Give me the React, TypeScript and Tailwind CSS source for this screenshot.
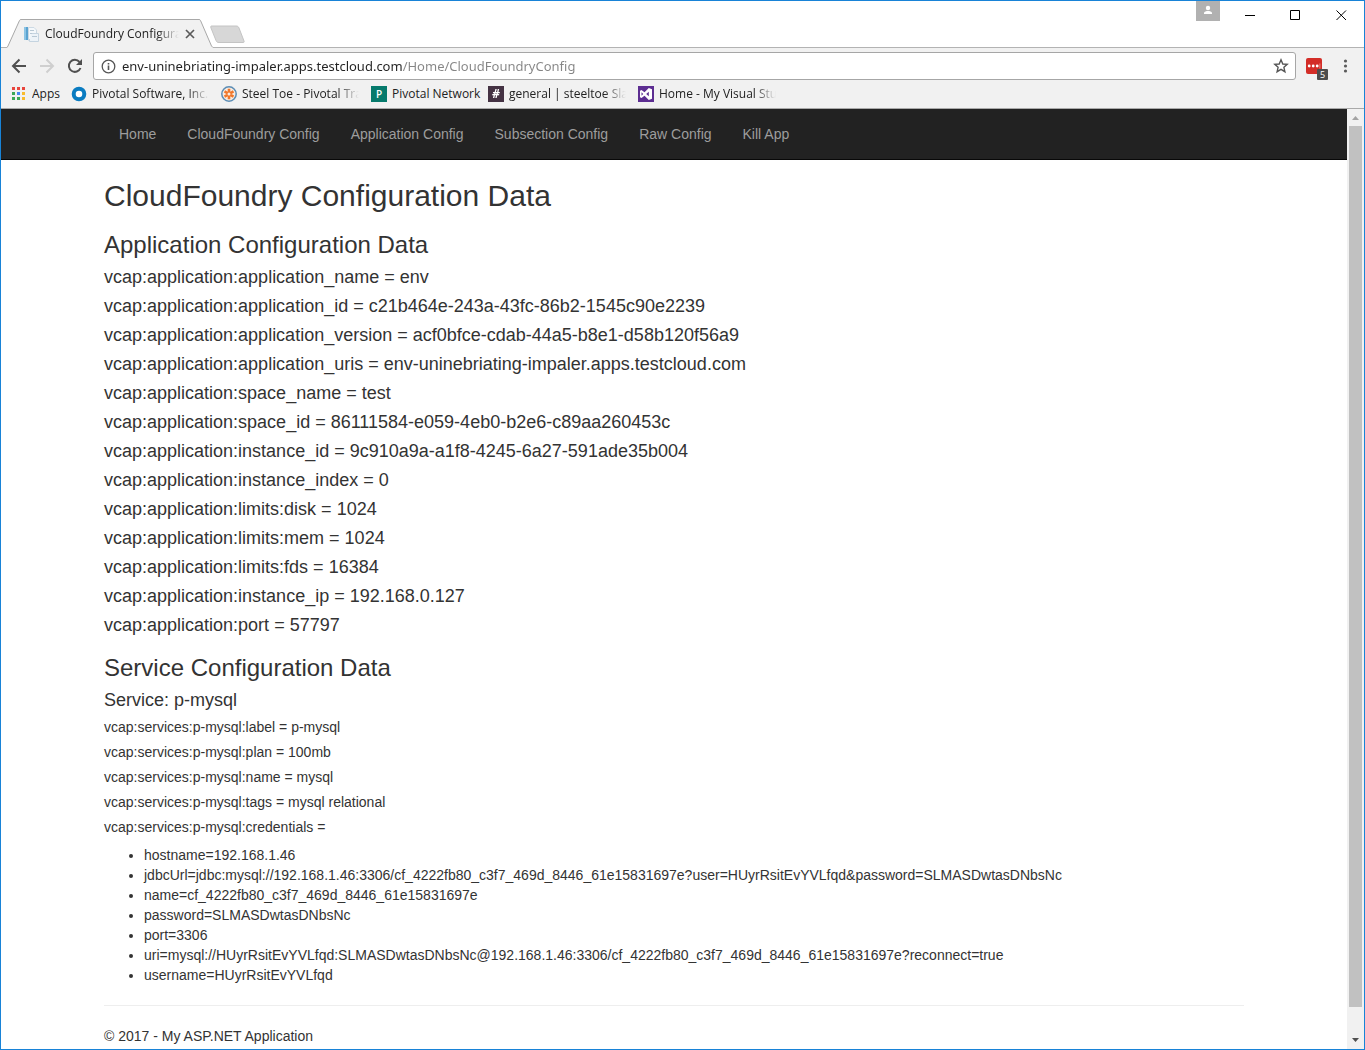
import type { ReactNode } from "react";

const navLinks = ["Home", "CloudFoundry Config", "Application Config", "Subsection Config", "Raw Config", "Kill App"];

const appSettings: [string, string][] = [
  ["application_name", "env"],
  ["application_id", "c21b464e-243a-43fc-86b2-1545c90e2239"],
  ["application_version", "acf0bfce-cdab-44a5-b8e1-d58b120f56a9"],
  ["application_uris", "env-uninebriating-impaler.apps.testcloud.com"],
  ["space_name", "test"],
  ["space_id", "86111584-e059-4eb0-b2e6-c89aa260453c"],
  ["instance_id", "9c910a9a-a1f8-4245-6a27-591ade35b004"],
  ["instance_index", "0"],
  ["limits:disk", "1024"],
  ["limits:mem", "1024"],
  ["limits:fds", "16384"],
  ["instance_ip", "192.168.0.127"],
  ["port", "57797"],
];

const serviceSettings: [string, string][] = [
  ["label", "p-mysql"],
  ["plan", "100mb"],
  ["name", "mysql"],
  ["tags", "mysql relational"],
  ["credentials", ""],
];

const credentials = [
  "hostname=192.168.1.46",
  "jdbcUrl=jdbc:mysql://192.168.1.46:3306/cf_4222fb80_c3f7_469d_8446_61e15831697e?user=HUyrRsitEvYVLfqd&password=SLMASDwtasDNbsNc",
  "name=cf_4222fb80_c3f7_469d_8446_61e15831697e",
  "password=SLMASDwtasDNbsNc",
  "port=3306",
  "uri=mysql://HUyrRsitEvYVLfqd:SLMASDwtasDNbsNc@192.168.1.46:3306/cf_4222fb80_c3f7_469d_8446_61e15831697e?reconnect=true",
  "username=HUyrRsitEvYVLfqd",
];

function Tab() {
  return (
    <div className="relative flex h-[29px] w-[206px] items-center pl-4">
      <svg className="absolute inset-0" width="206" height="29" viewBox="0 0 206 29" aria-hidden="true">
        <path d="M0 28.5L1 27L12.500 1.500C12.800.8 13.200.5 14 .5H192C192.800.5 193.200.8 193.500 1.500L204.500 27L206 28.500V29H0Z" fill="#f1f1f1" />
        <path d="M0 28.500L1 27L12.500 1.500C12.800.8 13.200.5 14 .5H192C192.800.5 193.200.8 193.500 1.500L204.500 27L206 28.500" fill="none" stroke="#a8a8a8" />
      </svg>
      <svg className="relative shrink-0" width="16" height="16" viewBox="0 0 16 16" aria-hidden="true">
        <path d="M1 1H5V14H1Z" fill="#5ba3d0" />
        <path d="M1 1H3V14H1Z" fill="#8cc4e4" />
        <path d="M5.500 1.500H11L13.500 4V14.500H5.500Z" fill="#f4f8fb" stroke="#ccd9e3" />
        <path d="M8.500 7.500H15.500V15.500H6.500V13" fill="#edf3f8" stroke="#c5d4e0" />
        <path d="M9 10.500H14M7 4.500H11M7 7.500H9" stroke="#b8c8d4" />
      </svg>
      <span className="relative ml-[6px] w-[134px] overflow-hidden whitespace-nowrap text-xs text-[#222] [mask-image:linear-gradient(to_right,black_112px,transparent_134px)]">
        CloudFoundry Configurat
      </span>
      <button aria-label="Close tab" className="relative ml-[6px] shrink-0">
        <svg width="10" height="10" viewBox="0 0 10 10">
          <path d="M1 1L9 9M9 1L1 9" stroke="#5a5a5a" strokeWidth="1.700" />
        </svg>
      </button>
    </div>
  );
}

function TitleBar() {
  return (
    <div className="flex h-[47px] items-end justify-between border-b border-[#b3b3b3] bg-white pl-[6px]">
      <div className="-mb-px flex">
        <Tab />
        <button aria-label="New tab" className="-ml-1 mt-[6px] self-start">
          <svg width="37" height="19" viewBox="0 0 37 19">
            <path d="M3 1H27C28.500 1 29.500 1.500 30 3L35 16C35.500 17 35 17.500 34 17.500H10C8.500 17.500 7.500 17 7 15.500L2 3C1.500 1.500 1.500 1 3 1Z" fill="#d7d7d7" stroke="#c4c4c4" />
          </svg>
        </button>
      </div>
      <div className="flex self-start">
        <button aria-label="Profile" className="mr-2 flex h-5 w-6 justify-center bg-[#b1b1b1] pt-[4px]">
          <svg width="10" height="10" viewBox="0 0 10 10" fill="#fff">
            <circle cx="5" cy="3" r="2.200" />
            <path d="M1 9V8C1 6.500 3.500 6 5 6S9 6.500 9 8V9Z" />
          </svg>
        </button>
        <button aria-label="Minimize" className="flex h-7 w-[45px] items-center justify-center">
          <svg width="11" height="11" viewBox="0 0 11 11" stroke="#000"><path d="M0 5.500H10" /></svg>
        </button>
        <button aria-label="Maximize" className="flex h-7 w-[45px] items-center justify-center">
          <svg width="11" height="11" viewBox="0 0 11 11" fill="none" stroke="#000"><path d="M.5.5H9.500V9.500H.5Z" /></svg>
        </button>
        <button aria-label="Close" className="flex h-7 w-[46px] items-center justify-center">
          <svg width="11" height="11" viewBox="0 0 11 11" stroke="#000"><path d="M.5.5L10 10M10 .5L.5 10" /></svg>
        </button>
      </div>
    </div>
  );
}

function AddressRow() {
  return (
    <div className="flex items-center px-[10px] pt-1">
      <button aria-label="Back" className="mr-[12px]">
        <svg width="16" height="16" viewBox="0 0 16 16" fill="none" stroke="#505050" strokeWidth="2">
          <path d="M15 8H2.500M8.500 1.500L2 8L8.500 14.500" />
        </svg>
      </button>
      <button aria-label="Forward" className="mr-[12px]">
        <svg width="16" height="16" viewBox="0 0 16 16" fill="none" stroke="#cfcfcf" strokeWidth="2">
          <path d="M1 8H13.500M7.500 1.500L14 8L7.500 14.500" />
        </svg>
      </button>
      <button aria-label="Reload" className="mr-[10px]">
        <svg width="16" height="16" viewBox="0 0 16 16" fill="none">
          <path d="M13.500 10A6 6 0 1 1 12.500 4" stroke="#505050" strokeWidth="2" />
          <path d="M15 1V7H9Z" fill="#505050" />
        </svg>
      </button>
      <div className="flex h-7 flex-1 items-center rounded-[3px] border border-[#a6a6a6] bg-white pr-[6px] pl-[7px]">
        <svg className="shrink-0" width="15" height="15" viewBox="0 0 15 15" fill="none" role="img" aria-label="Site information">
          <circle cx="7.500" cy="7.500" r="6.300" stroke="#555" strokeWidth="1.300" />
          <path d="M7.500 6.500V11M7.500 4V5.500" stroke="#555" strokeWidth="1.600" />
        </svg>
        <input
          aria-label="Address"
          defaultValue="env-uninebriating-impaler.apps.testcloud.com/Home/CloudFoundryConfig"
          className="ml-[6px] min-w-0 flex-1 bg-[linear-gradient(to_right,#222_281px,#858585_281px)] bg-clip-text font-['Noto_Sans',sans-serif] text-[13px] leading-5 text-transparent caret-black outline-none"
        />
        <button aria-label="Bookmark this page">
          <svg width="16" height="16" viewBox="0 0 16 16" fill="none" stroke="#555" strokeWidth="1.400">
            <path d="M8 1.800L9.800 6L14.200 6.400L10.900 9.300L11.900 13.700L8 11.400L4.100 13.700L5.100 9.300L1.800 6.400L6.200 6Z" />
          </svg>
        </button>
      </div>
      <button aria-label="Password manager, 5 items" className="relative ml-[10px] h-4 w-4 rounded-[2px] bg-[#d32d27]">
        <svg width="16" height="16" viewBox="0 0 16 16" fill="#fff">
          <circle cx="3.200" cy="8" r="1.400" />
          <circle cx="7.200" cy="8" r="1.400" />
          <circle cx="11.200" cy="8" r="1.400" />
          <path d="M13.500 5.500H14.300V10.500H13.500Z" fill="#f0a09c" />
        </svg>
        <span className="absolute top-[11px] left-[11px] flex h-[11px] w-[11px] items-center justify-center rounded-[1px] bg-[#4d4d4d] text-[9px] leading-none text-white">
          5
        </span>
      </button>
      <button aria-label="Menu" className="ml-[18px] pr-[3px]">
        <svg width="11" height="16" viewBox="0 0 11 16" fill="#5a5a5a">
          <circle cx="5.500" cy="3" r="1.600" />
          <circle cx="5.500" cy="8" r="1.600" />
          <circle cx="5.500" cy="13" r="1.600" />
        </svg>
      </button>
    </div>
  );
}

function Bookmark({ icon, children, width }: { icon: ReactNode; children: string; width: string }) {
  return (
    <a href="#" className={`flex items-center gap-[5px] ${width}`}>
      {icon}
      <span className="flex-1 overflow-hidden whitespace-nowrap">{children}</span>
    </a>
  );
}

const fade = "[mask-image:linear-gradient(to_right,black_calc(100%-34px),transparent_calc(100%-12px))]";

function BookmarksBar() {
  return (
    <nav aria-label="Bookmarks" className="flex h-[28px] items-center pl-[10px] text-xs text-[#222]">
      <Bookmark
        width="w-[60px]"
        icon={
          <svg className="shrink-0" width="16" height="16" viewBox="0 0 16 16">
            <path d="M1 1H4V4H1ZM6 1H9V4H6ZM11 1H14V4H11Z" fill="#e8453c" />
            <path d="M1 6H4V9H1ZM1 11H4V14H1Z" fill="#3aa757" />
            <path d="M6 6H9V9H6Z" fill="#4587f3" />
            <path d="M11 6H14V9H11ZM6 11H9V14H6ZM11 11H14V14H11Z" fill="#f9bb2d" />
            <path d="M6 11H9V14H6Z" fill="#3aa757" />
          </svg>
        }
      >
        Apps
      </Bookmark>
      <Bookmark
        width={`w-[150px] ${fade}`}
        icon={
          <svg className="shrink-0" width="16" height="16" viewBox="0 0 16 16">
            <circle cx="8" cy="8" r="5.300" fill="#fff" stroke="#0a7cc1" strokeWidth="4" />
          </svg>
        }
      >
        Pivotal Software, Inc. -
      </Bookmark>
      <Bookmark
        width={`w-[150px] ${fade}`}
        icon={
          <svg className="shrink-0" width="16" height="16" viewBox="0 0 16 16">
            <circle cx="8" cy="8" r="7.200" fill="#f8ebe0" stroke="#5b8db5" strokeWidth="1.500" />
            <path d="M8 2.800V13.200M3.500 5.400L12.500 10.600M12.500 5.400L3.500 10.600" stroke="#f0772b" strokeWidth="2.600" />
            <circle cx="8" cy="8" r="1.500" fill="#f8ebe0" />
          </svg>
        }
      >
        Steel Toe - Pivotal Trac
      </Bookmark>
      <Bookmark
        width="w-[117px]"
        icon={<span className="flex h-4 w-4 shrink-0 items-center justify-center bg-[#067a6c] text-[10px] leading-none font-semibold text-white">P</span>}
      >
        Pivotal Network
      </Bookmark>
      <Bookmark
        width={`w-[150px] ${fade}`}
        icon={<span className="flex h-4 w-4 shrink-0 items-center justify-center bg-[#443243] text-xs leading-none font-bold text-white italic">#</span>}
      >
        general | steeltoe Slac
      </Bookmark>
      <Bookmark
        width={`w-[150px] ${fade}`}
        icon={
          <svg className="shrink-0" width="16" height="16" viewBox="0 0 16 16">
            <path d="M0 0H16V16H0Z" fill="#5c2d91" />
            <path d="M10.800 2L14 3.300V12.700L10.800 14L6.500 9.800L3.500 12L2 11.200V4.800L3.500 4L6.500 6.200ZM10.800 5.700L8.200 8L10.800 10.300ZM3.500 6.200V9.800L5.200 8Z" fill="#fff" fillRule="evenodd" />
          </svg>
        }
      >
        Home - My Visual Stu
      </Bookmark>
    </nav>
  );
}

function Scrollbar() {
  return (
    <div aria-hidden="true" className="flex w-[17px] shrink-0 flex-col items-center bg-[#f1f1f1]">
      <svg width="17" height="17" viewBox="0 0 17 17"><path d="M5 11H12L8.500 7Z" fill="#a3a3a3" /></svg>
      <div className="w-[13px] flex-1 bg-[#c1c1c1]" />
      <svg className="mt-[25px]" width="17" height="17" viewBox="0 0 17 17"><path d="M5 6H12L8.500 10Z" fill="#505050" /></svg>
    </div>
  );
}

export default function App() {
  return (
    <div className="flex min-h-screen flex-col border border-[#1883d7] bg-white font-['Liberation_Sans',Arial,sans-serif]">
      <header className="border-b border-[#a9a9a9] bg-[#f1f1f1] font-['Open_Sans',sans-serif]">
        <TitleBar />
        <AddressRow />
        <BookmarksBar />
      </header>
      <div className="flex flex-1">
        <div className="min-w-0 flex-1 text-sm leading-5 text-[#333]">
          <nav aria-label="Main" className="border-b border-[#080808] bg-[#222]">
            <ul className="mx-auto flex max-w-[1170px] flex-wrap gap-px px-[15px]">
              {navLinks.map((label) => (
                <li key={label}>
                  <a href="#" className="block p-[15px] text-[#9d9d9d] hover:text-white">{label}</a>
                </li>
              ))}
            </ul>
          </nav>
          <main className="mx-auto max-w-[1170px] px-[15px] pt-[19px]">
            <h1 className="text-3xl leading-[33px]">CloudFoundry Configuration Data</h1>
            <h2 className="mt-5 mb-[10px] text-2xl leading-[26px]">Application Configuration Data</h2>
            <div className="space-y-[10px] text-lg leading-[19px]">
              {appSettings.map(([key, value]) => (
                <p key={key}>vcap:application:{key} = {value}</p>
              ))}
            </div>
            <h2 className="mt-5 mb-[10px] text-2xl leading-[26px]">Service Configuration Data</h2>
            <h3 className="mb-[10px] text-lg leading-[19px]">Service: p-mysql</h3>
            <div className="space-y-[10px] leading-[15px]">
              {serviceSettings.map(([key, value]) => (
                <p key={key}>vcap:services:p-mysql:{key} = {value}</p>
              ))}
            </div>
            <ul className="mt-[10px] list-disc pl-10">
              {credentials.map((item) => (
                <li key={item} className="break-words">{item}</li>
              ))}
            </ul>
            <hr className="my-5 border-[#eee]" />
            <footer>
              <p>© 2017 - My ASP.NET Application</p>
            </footer>
          </main>
        </div>
        <Scrollbar />
      </div>
    </div>
  );
}
